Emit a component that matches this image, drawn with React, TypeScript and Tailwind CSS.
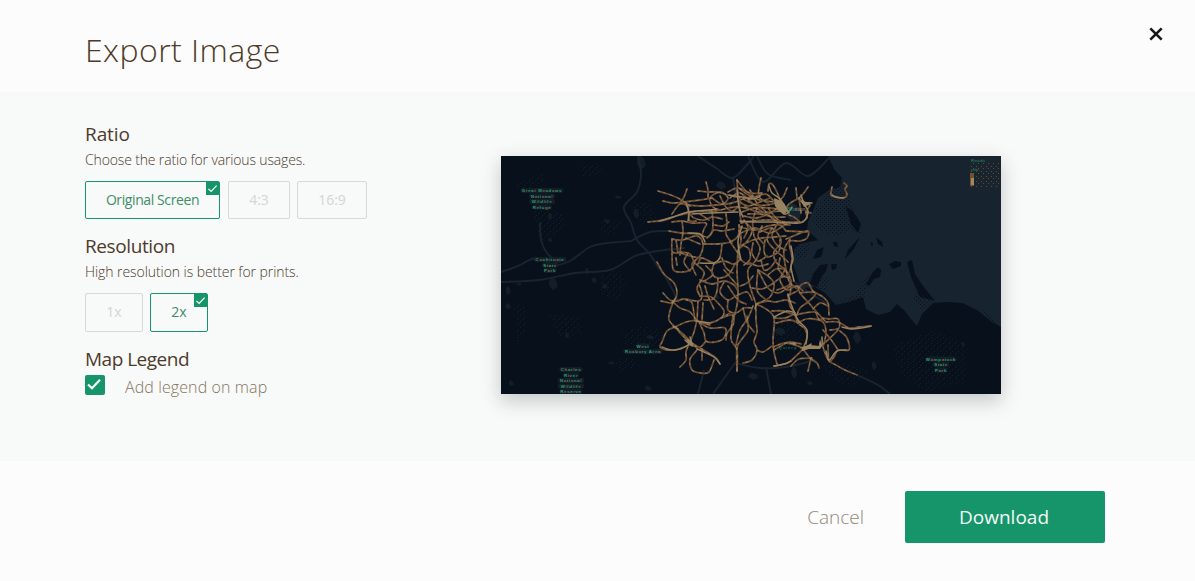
import React from "react";

/* Street segments in map space (x 501-1001, y 156-394). */
const brown: string[] = [
  "648,222 665,220 676,216 688,213 700,211 715,211 735,207 750,209",
  "658,191 668,194 678,198 686,203 690,206", "687,189 684,197 681,201", "663,201 672,203 684,202 700,200 712,198",
  "698,191 708,192 717,192 728,195 740,198", "706,182 708,190 708,197", "737,180 738,195 739,206 741,222", "737,180 745,190 753,197",
  "688,205 700,206 716,205 732,203 746,198 760,196", "672,214 680,204 688,207 689,220 696,221", "688,212 694,218 704,220 712,217 722,219",
  "712,198 722,204 728,198 720,192 710,198 713,207 720,210", "672,222 682,221 692,223 706,223 704,229 702,235", "682,221 683,232 681,244 680,255",
  "669,231 681,233 697,234 708,237 714,230 722,231 734,229", "672,239 682,240 697,236 703,244 700,256 692,264 696,275",
  "672,239 672,251 676,253 681,252 690,254 694,262", "676,240 678,253", "712,211 713,222 712,232 707,238",
  "718,244 703,244", "718,244 730,242 738,236 739,225", "722,244 720,257 714,263 702,258 698,264", "730,242 735,249 740,258 734,264 724,261 714,264",
  "714,263 712,273 718,278 728,275 735,264", "696,264 704,272 702,279 697,288 700,296", "672,253 673,269 679,272 690,270 695,262",
  "657,262 664,274 674,283 677,293 674,302", "663,293 670,300 677,301 684,299 699,301 702,294 699,284", "661,301 670,303 673,302 670,311 669,320 675,327",
  "673,302 680,308 690,312 698,321 710,325", "675,327 686,322 697,320", "675,327 667,331 662,342 660,347 668,350 679,349 690,342 675,327",
  "675,327 683,336 690,342", "697,320 694,332 690,342", "690,342 686,352 686,360 680,367", "690,342 700,348 707,352 716,358 720,364", "690,342 697,349 690,359 692,370 701,373 709,372 714,360",
  "702,349 702,360", "699,322 704,333 706,341 715,342 724,338 725,328 710,328 700,323", "706,341 700,347 691,345",
  "686,300 692,303 695,321", "698,301 697,321", "703,303 702,320", "700,296 711,297 718,303 724,311 721,318 710,323 700,322",
  "700,280 712,284 724,281 734,285 738,291", "718,278 717,291 713,299 704,300", "724,282 720,292 728,300 736,296 747,292 752,300",
  "728,300 728,310 736,313 744,308 752,308", "721,318 730,313", "721,318 733,315 733,325 727,333 726,340", "733,315 731,339 737,350 737,371",
  "737,371 737,348 742,339 748,330 747,316", "753,306 748,318 740,330 736,345", "738,250 737,270 738,290 737,305 731,328",
  "739,225 741,240 738,255 745,263 751,264", "744,265 750,259 749,249 742,245", "757,208 753,220 754,236 760,248 756,260 748,270 750,286 756,304",
  "756,304 756,320 757,332 754,342 757,350 752,360 743,363", "756,304 767,301 775,302 786,300 795,303", "756,304 766,309 774,318 773,340 774,352 777,364",
  "758,270 757,290 765,299", "758,270 768,276 774,284 770,297 756,304", "759,272 768,288 778,293 786,289 792,285", "768,275 776,269 785,270 790,278 789,285 777,290",
  "752,288 762,289 772,284 782,277 790,277", "756,208 769,216 780,223 790,225", "748,214 760,214 774,217 785,217", "740,227 755,230 768,226 780,225 786,231",
  "741,223 753,221 770,220 786,222 800,222", "745,207 758,212 770,212 781,211", "743,199 756,205 768,205 779,202", "740,189 753,198 766,201 776,202",
  "761,178 759,188 759,197 768,203", "768,191 769,184 773,185 779,197 782,208", "787,188 783,197 777,202", "796,188 797,198", "808,187 803,194 799,198 789,204 784,212",
  "799,198 805,204 810,205 806,212 807,218 802,222", "806,212 811,213", "799,198 801,213", "832,187 831,195 836,197 843,198 847,195 845,189 847,186 844,183",
  "789,215 794,217 800,222", "786,239 807,231 807,238 800,241 790,241 790,248 792,258 790,272", "787,231 807,232",
  "760,232 771,228 778,234 781,243 774,252 776,262 785,269", "742,245 753,240 762,238 774,237 786,236", "765,240 764,251 768,257 779,251 780,240",
  "753,243 752,253 758,261 767,256", "761,260 764,270 770,268 776,260", "790,239 784,250 785,264 789,281 796,288", "772,228 767,239 773,248 782,256 788,262",
  "785,270 780,280 787,290 796,286 803,291", "788,295 790,306 794,312 798,323 805,329 807,337 803,349", "788,295 797,291 801,285 808,283 813,291 823,297 828,303 829,315",
  "798,286 800,293 808,302 814,309 825,321", "800,293 813,292 815,295 808,302 800,308 797,315", "813,309 820,303 828,306", "795,315 805,313 815,312 818,318 822,320",
  "772,311 783,311 795,315", "774,318 785,318 794,314", "776,323 790,320 798,323", "798,323 806,319 814,319 823,322 826,333 823,347",
  "822,318 829,319 838,319 839,328 830,330", "826,322 838,322 849,328 859,327 871,326", "840,331 847,338 849,350 838,350 834,357 829,361 828,345",
  "823,330 832,341 838,350", "822,345 829,339 838,330", "774,350 781,346 789,342 801,344", "773,347 786,343 801,347",
  "803,349 796,356 788,363 779,365 774,366", "803,349 810,358 817,363 819,368", "791,366 799,359 812,358", "811,358 808,371", "823,347 825,353 829,361 836,365 845,370 857,375",
  "757,350 763,352 772,346", "715,225 723,226 729,222", "726,214 727,224 726,234 732,243", "700,214 709,220", "720,196 726,207 733,211 740,204",
  "686,238 700,244", "681,253 690,256 701,258", "722,258 726,268 733,273", "706,266 713,274 706,280 700,282", "753,276 747,283 740,286",
  "676,258 677,265", "688,253 684,262 690,271", "705,286 708,296 714,309", "724,270 731,278 737,285", "743,308 747,322 754,332",
  "744,220 748,228 744,238", "750,190 757,203 764,210 779,225", "742,212 754,208 770,208 786,211", "768,208 776,218 786,225",
  "741,233 755,228 770,233 786,224", "748,200 765,194 774,201 782,205", "778,269 784,276 791,280 790,295",
  "740,202 748,206 760,202 770,198", "744,216 756,218 768,214 778,208", "746,223 752,230 748,240 740,248", "762,226 758,236 764,244", "776,226 772,236 778,246 786,250",
  "728,192 738,188 750,193 762,193", "730,198 740,193 752,203", "768,264 758,266 748,262", "728,286 738,300 746,304", "780,258 778,268",
];

const bright: string[] = [
  "659,221 673,217 688,212 708,210 717,209", "686,203 689,213 688,221", "692,214 710,213 738,212", "729,195 742,197 754,199 760,196",
  "737,190 739,207 743,217", "740,221 755,222 773,222 791,223 803,222 808,211 801,201", "769,186 772,193 780,199 785,207 789,213",
  "775,200 780,204 785,214 790,210 792,207", "801,195 804,202 812,203", "791,246 793,259 791,267 794,281", "742,226 738,242 741,260",
  "675,299 672,303", "673,326 678,329", "696,321 710,323", "685,340 692,346 690,337", "697,349 704,352 714,357 720,364", "662,347 671,350 680,349 690,344",
  "756,304 755,309", "788,294 791,304 798,320 807,330 806,344", "801,348 810,346 821,346 822,337", "811,344 811,347 820,347 820,343", "774,317 787,311 795,313",
  "790,343 796,344", "826,351 829,360 837,351 847,350", "843,198 836,197 832,195", "774,366 784,364 791,361", "842,327 851,329 861,328 871,326",
  "700,263 714,263 720,258", "688,233 700,234 705,242",
];

const darkRoads: string[] = [
  "638,156 641,174 637,192 624,207 631,223 637,240 649,253 658,267 668,281 679,303", "631,241 650,232 670,231", "631,241 608,243 590,247 570,261 554,265 536,258 518,266 501,272",
  "501,282 539,280 575,273 610,270 635,256 658,251 685,248", "698,156 716,168 732,178 745,167 754,156", "733,178 735,196 729,207",
  "748,156 763,182 786,163 808,176 829,158", "757,156 768,174 791,180", "735,363 760,368 786,367 815,360", "735,363 713,394", "704,370 698,394", "857,375 878,385 890,394", "766,367 771,394", "540,222 541,240 547,253 558,262", "792,280 813,295 830,305",
];

/* [centre x, centre y, width, height] */
const specks: [number, number, number, number][] = [
  [641, 162, 9, 14], [550, 216, 4, 7], [618, 197, 7, 3], [607, 221, 6, 4], [550, 240, 5, 4], [556, 261, 9, 5], [587, 271, 4, 7],
  [553, 283, 9, 13], [508, 290, 5, 9], [519, 284, 5, 3], [567, 335, 4, 6], [511, 383, 5, 6], [648, 388, 7, 5], [594, 280, 5, 6], [721, 185, 10, 8],
  [753, 376, 10, 7], [794, 372, 6, 12], [874, 365, 5, 9], [810, 383, 6, 4], [857, 337, 8, 12], [963, 344, 3, 5], [611, 363, 6, 3],
  [636, 213, 6, 10], [605, 286, 5, 5], [650, 337, 8, 4], [717, 297, 5, 4], [780, 331, 11, 8], [508, 306, 6, 6],
];

type Label = { x: number; y: number; lines: string[] };
const labels: Label[] = [
  { x: 542, y: 192, lines: ["Great Meadows", "National", "Wildlife", "Refuge"] },
  { x: 550, y: 261, lines: ["Cochituate", "State", "Park"] },
  { x: 643, y: 347.5, lines: ["West", "Roxbury Area"] },
  { x: 571, y: 371, lines: ["Charles", "River", "National", "Wildlife", "Reserve"] },
  { x: 941, y: 360.5, lines: ["Wompatuck", "State", "Park"] },
];

/* Turns a point list into a smooth curve that passes through every point. */
function curve(list: string): string {
  const p = list.split(" ").map((pair) => pair.split(",").map(Number));
  let d = `M${p[0][0]} ${p[0][1]}`;
  for (let i = 0; i < p.length - 1; i++) {
    const a = p[i - 1] ?? p[i];
    const b = p[i];
    const c = p[i + 1];
    const e = p[i + 2] ?? c;
    d += `C${b[0] + (c[0] - a[0]) / 6} ${b[1] + (c[1] - a[1]) / 6} ${c[0] - (e[0] - b[0]) / 6} ${c[1] - (e[1] - b[1]) / 6} ${c[0]} ${c[1]}`;
  }
  return d;
}

function MapPreview() {
  return (
    <svg className="block h-[238px] w-[500px] shadow-[0_7px_18px_rgba(41,60,52,0.26)]" viewBox="501 156 500 238" aria-label="Map preview">
      <defs>
        <pattern id="grain" width="6" height="6" patternUnits="userSpaceOnUse">
          <path d="M1 1h1v1H1zM4 3h1v1H4zM2 5h1v1H2z" fill="#14202b" />
        </pattern>
        <pattern id="shore" width="4" height="4" patternUnits="userSpaceOnUse">
          <path d="M0 0h1v1H0zM2 2h1v1H2z" fill="#08111b" />
        </pattern>
        <pattern id="legendGrain" width="5" height="5" patternUnits="userSpaceOnUse">
          <path d="M1 1h1v1H1zM3 3h1v1H3z" fill="#67492f" />
        </pattern>
      </defs>
      <rect x="501" y="156" width="500" height="238" fill="#08111b" />
      <path d="M828 156L834 169 842 178 840 187 829 190 818 198 813 211 808 222 807 230 818 240 800 244 794 249 793 264 798 279 801 288 815 287 825 293 836 305 849 302 863 297 866 309 878 315 890 312 897 304 904 310 912 320 917 326 922 314 933 303 947 302 963 303 978 311 992 322 1001 327V156Z" fill="#17232e" />
      <path d="M789 203l6 1 7 7-3 9-8 1-5-6z" fill="#17232e" />
      <path d="M578 164L600 163 604 173 583 178ZM514 187L529 178 545 174 544 183 525 190ZM533 208L548 209 565 217 560 235 540 244ZM600 276l18-7 9 14-10 20-16-9ZM547 314l31 2 4 18-21 5ZM622 333l18-8 19 4 9 10-12 8-32-2ZM771 322l27-2 8 20-29 4ZM893 346l40-16 35 16-3 37-37 9-28-17ZM513 303l12 4 1 24-9 14ZM611 361l22-4 7 8-20 8ZM822 365l24-2 22 8-12 17-21-6ZM631 206l18-4 10 18-18 7ZM602 217l19 5-8 15-13-4Z" fill="url(#grain)" />
      <path d="M826 158L841 175 847 189 857 218 862 235 850 228 840 236 819 230 811 221 818 203 830 191ZM793 247l18-4-5 13-9 5ZM808 277l22 0-4 12-16 5ZM836 301l19-6 9-17 6-6-6 27-9 10ZM915 286l11 14 9-2-13 13-8-10ZM949 302l34 13 18 12-19-17Z" fill="url(#shore)" />
      <g fill="#08111b">
        <path d="M846 207L853 211 861 224 858 233 851 224ZM857 240L860 237 854 249 845 259 848 250ZM876 237L882 242 883 247 878 244ZM817 250L824 247 821 257 813 259ZM833 242l4 0 1 5-4-1ZM870 242l3 1-1 4ZM873 272l5-5 3 3-1 7-6 2-5 7-3-2zM889 264l6-3 6 1 0 4-8 3zM907 262l5-2 3 14 8 12 12 15-15-4-9-20zM820 265l8-1-2 7-5 7-4 9-7-3 3-10zM831 264h6l-1 5-4 1z" />
      </g>
      <g fill="none" stroke="#18242f" strokeWidth="1.9" strokeLinejoin="round">
        {darkRoads.map((points) => <path key={points} d={curve(points)} />)}
      </g>
      <g fill="#18242f" opacity="0.7">
        {specks.map(([x, y, w, h]) => <path key={`${x}-${y}`} d={`M${x - w / 2} ${y}l${w / 3} ${-h / 2} ${w / 2} ${h / 4} ${w / 5} ${h / 2} ${-w / 2} ${h / 3} ${-w / 3} ${-h / 4}Z`} />)}
      </g>
      <g fill="none" stroke="#6c4d33" strokeWidth="1.8" strokeLinejoin="round" strokeLinecap="round">
        {brown.map((points) => <path key={points} d={curve(points)} />)}
      </g>
      <g fill="none" stroke="#988260" strokeLinejoin="round" strokeLinecap="round">
        {brown.map((points) => <path key={points} d={curve(points)} strokeWidth="0.9" strokeDasharray="2 4 1 5 3 6" />)}
        {bright.map((points) => <path key={points} d={curve(points)} strokeWidth="1.5" />)}
      </g>
      <path d="M774 198l5 2 5 3 4 7-4 5-5-4-4-5zM802 199l3 3 6 0-3 3-4 2-2-4zM802 348l8-4 1 2h8l1-7 2 7-2 3-11 0-7 2zM686 339l4 1 4 4-2 2-4-3z" fill="#988260" />
      <text x="787" y="211" fontFamily="Liberation Sans" fontSize="6" fill="#9a9680"><tspan fill="#20986b">Bo</tspan>ston</text>
      {labels.map(({ x, y, lines }) => (
        <g key={lines.join()}>
          {lines.map((line, index) => (
            <g key={line}>
              <rect x={x - line.length * 1.65} y={y + index * 5.5 - 4} width={line.length * 3.3} height="5" rx="2" fill="#121e28" />
              <text x={x} y={y + index * 5.5} textAnchor="middle" fontFamily="Liberation Sans" fontSize="4.4" fontWeight="700" letterSpacing="0.6">
                {line.split("").map((letter, n) => <tspan key={n} fill={n % 3 === 1 ? "#8a6245" : "#2f9a70"}>{letter}</tspan>)}
              </text>
            </g>
          ))}
        </g>
      ))}
      <text x="788" y="349" textAnchor="middle" fontFamily="Liberation Sans" fontSize="4" letterSpacing="1" fill="#248965">Quincy</text>
      <rect x="969" y="158" width="31" height="30" fill="#18242e" />
      <rect x="970" y="163" width="29" height="24" fill="url(#legendGrain)" />
      <text x="971" y="162" fontFamily="Liberation Sans" fontSize="4.2" letterSpacing="0.5" fill="#25946a">Roads</text>
      <text x="971" y="171" fontFamily="Liberation Sans" fontSize="3.5" fill="#25946a">color</text>
      <path d="M970 173h4v13h-4z" fill="#72502f" /><path d="M971 178h3v7h-3z" fill="#a08862" />
    </svg>
  );
}

function Tick({ className }: { className: string }) {
  return <svg className={className} viewBox="0 0 12 12" fill="none" stroke="#f5faf7"><path d="M1.5 6.4L4.5 9.2L10.5 2.8" /></svg>;
}

function Option({ label, width, height, selected = false, spacing = "" }: { label: string; width: string; height: string; selected?: boolean; spacing?: string }) {
  return (
    <button className={`relative flex items-center justify-center rounded-[2px] border pb-[2px] text-[14px] ${width} ${height} ${spacing} ${selected ? "border-[#17956a] text-[#3d8e68]" : "border-[#d5d9d7] text-[#d2d6d4]"}`}>
      {label}
      {selected && <span className="absolute top-0 right-0 flex h-[13px] w-[13px] items-center justify-center bg-[#17956a]"><Tick className="h-[11px] w-[11px] [stroke-width:1.4]" /></span>}
    </button>
  );
}

export default function App() {
  return (
    <main className="flex h-[581px] w-full flex-col overflow-hidden bg-[#fcfcfc] font-['Open_Sans','Noto_Sans',sans-serif] text-[#4d3b2a]">
      <header className="flex h-[92px] shrink-0 items-start justify-between pr-[32px] pl-[85px]">
        <h1 className="mt-[28px] text-[32px] leading-[44px] font-light tracking-[0.45px] whitespace-nowrap">Export Image</h1>
        <button className="mt-[27px] flex h-[14px] w-[14px] items-center justify-center" aria-label="Close">
          <svg className="h-[14px] w-[14px]" viewBox="0 0 14 14" stroke="#17181b" strokeWidth="2.6"><path d="M1.3 1.3l11.4 11.4M12.7 1.3L1.3 12.7" /></svg>
        </button>
      </header>
      <section className="flex h-[369px] shrink-0 bg-[#f8f9f9] pl-[85px]">
        <div className="w-[416px] shrink-0 pt-[28px]">
          <div className="h-[112px]">
            <h2 className="h-[28px] text-[19px] leading-[28px] tracking-[-0.1px]">Ratio</h2>
            <p className="h-[33px] text-[14px] leading-[24px] font-[350] tracking-[-0.15px]">Choose the ratio for various usages.</p>
            <div className="flex">
              <Option label="Original Screen" width="w-[135px]" height="h-[38px]" spacing="mr-[8px] tracking-[-0.4px]" selected />
              <Option label="4:3" width="w-[62px]" height="h-[38px]" spacing="mr-[7px]" />
              <Option label="16:9" width="w-[70px]" height="h-[38px]" />
            </div>
          </div>
          <div className="h-[113px]">
            <h2 className="h-[28px] text-[19px] leading-[28px] tracking-[-0.4px]">Resolution</h2>
            <p className="h-[33px] text-[14px] leading-[24px] font-[350] tracking-[-0.07px]">High resolution is better for prints.</p>
            <div className="flex gap-[7px]">
              <Option label="1x" width="w-[58px]" height="h-[39px]" />
              <Option label="2x" width="w-[58px]" height="h-[39px]" selected />
            </div>
          </div>
          <h2 className="h-[28px] text-[19px] leading-[28px] tracking-[-0.5px]">Map Legend</h2>
          <label className="flex h-[24px] items-start text-[16px] leading-[28px] font-light tracking-[0.1px] text-[#85775d]">
            <span className="mt-[2px] mr-[20px] flex h-[20px] w-[20px] items-center justify-center rounded-[2px] bg-[#17956a] pr-[2px] pb-[2px]"><Tick className="h-[16px] w-[16px] [stroke-width:1.7]" /></span>
            <span>Add legend on map</span>
          </label>
        </div>
        <div className="pt-[64px]"><MapPreview /></div>
      </section>
      <footer className="flex h-[120px] items-start justify-end pt-[30px] pr-[90px]">
        <button className="mr-[41px] h-[52px] text-[19px] font-light text-[#91897a]">Cancel</button>
        <button className="h-[52px] w-[200px] rounded-[2px] bg-[#17956a] pr-[2px] text-[19px] text-[#f4faf7]">Download</button>
      </footer>
    </main>
  );
}
